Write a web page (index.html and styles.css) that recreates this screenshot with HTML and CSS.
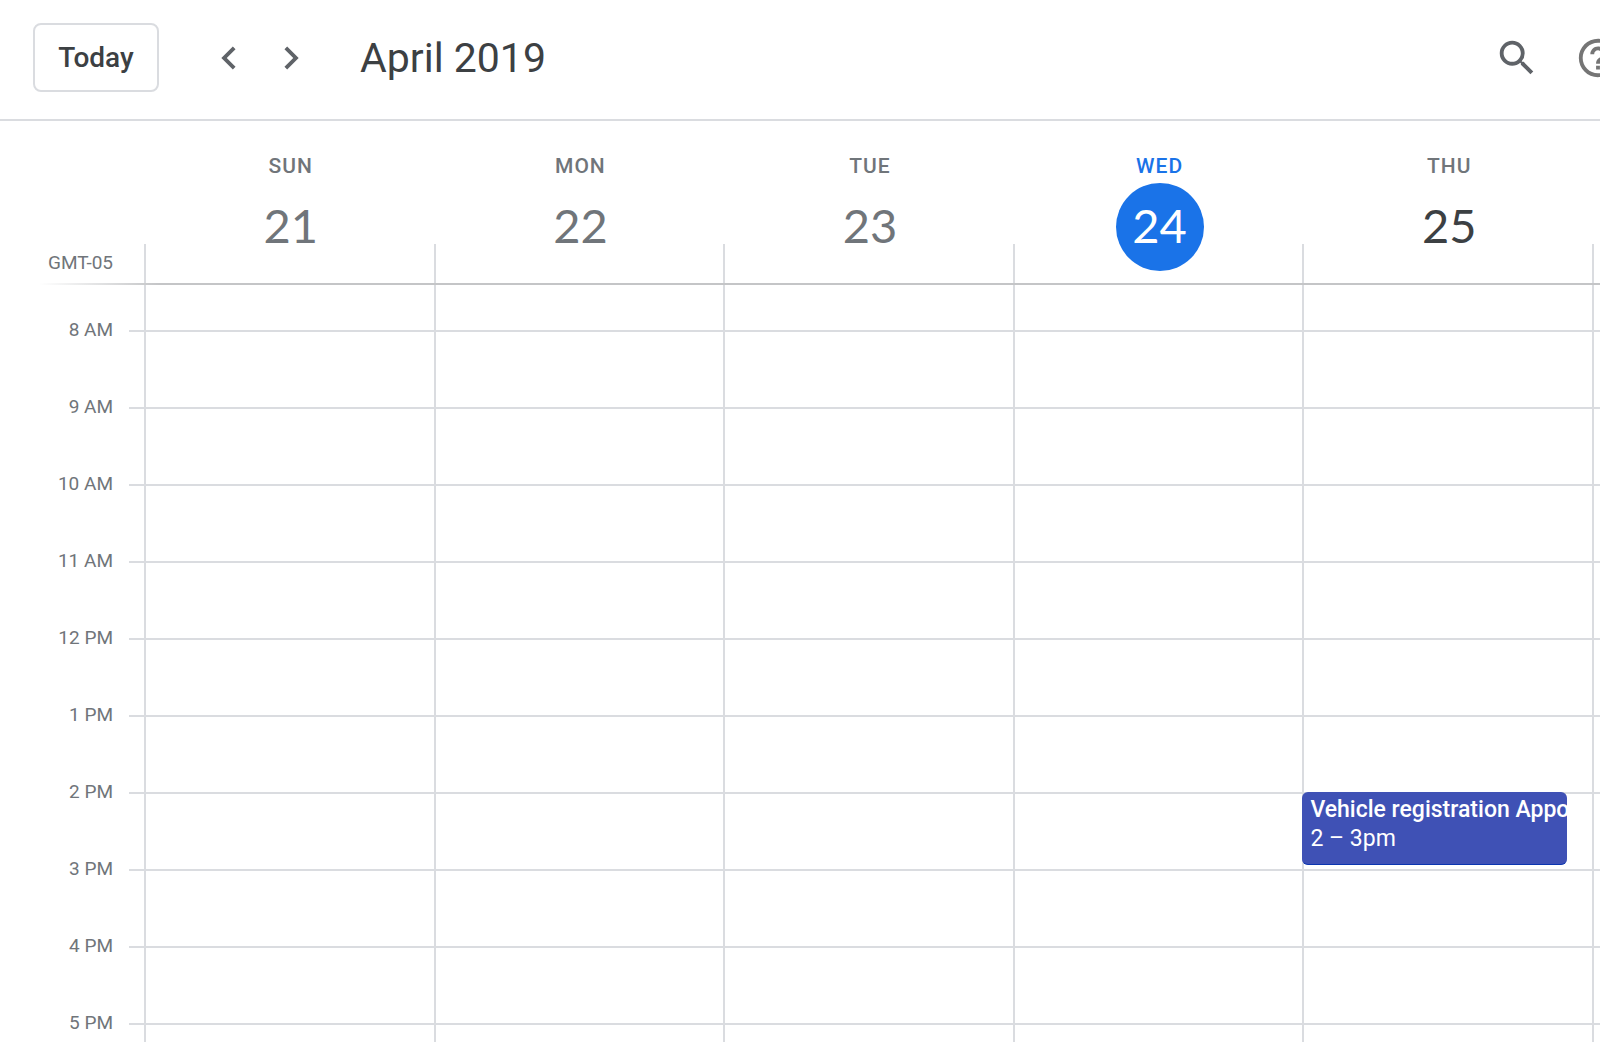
FILE: index.html
```html
<!DOCTYPE html>
<html lang="en">
<head>
    <meta charset="UTF-8">
    <meta name="viewport" content="width=device-width, initial-scale=1.0">
    <title>Calendar - April 2019</title>
    <link rel="stylesheet" href="styles.css">
</head>
<body>
    <header class="toolbar">
        <button class="today-button" type="button">Today</button>
        <nav class="pager">
            <button class="icon-button" type="button" aria-label="Previous week">
                <svg viewBox="0 0 24 24"><path d="M15.41 7.41L14 6l-6 6 6 6 1.41-1.41L10.83 12z"/></svg>
            </button>
            <button class="icon-button" type="button" aria-label="Next week">
                <svg viewBox="0 0 24 24"><path d="M10 6L8.59 7.41 13.17 12l-4.58 4.59L10 18l6-6z"/></svg>
            </button>
        </nav>
        <h1 class="title">April 2019</h1>
        <div class="actions">
            <button class="icon-button" type="button" aria-label="Search">
                <svg viewBox="0 0 24 24"><path d="M15.5 14h-.79l-.28-.27A6.471 6.471 0 0 0 16 9.5 6.5 6.5 0 1 0 9.5 16c1.61 0 3.09-.59 4.23-1.57l.27.28v.79l5 4.99L20.49 19l-4.99-5zm-6 0C7.01 14 5 11.99 5 9.5S7.01 5 9.5 5 14 7.01 14 9.5 11.99 14 9.5 14z"/></svg>
            </button>
            <button class="icon-button help" type="button" aria-label="Help">
                <svg viewBox="0 0 24 24"><path d="M11 18h2v-2h-2v2zm1-16C6.48 2 2 6.48 2 12s4.48 10 10 10 10-4.48 10-10S17.52 2 12 2zm0 18c-4.41 0-8-3.59-8-8s3.59-8 8-8 8 3.59 8 8-3.59 8-8 8zm0-14c-2.21 0-4 1.79-4 4h2c0-1.1.9-2 2-2s2 .9 2 2c0 2-3 1.75-3 5h2c0-2.25 3-2.5 3-5 0-2.21-1.79-4-4-4z"/></svg>
            </button>
        </div>
    </header>

    <main class="week">
        <div class="week-head">
            <div class="timezone">GMT-05</div>
            <div class="day past"><span class="day-name">Sun</span><span class="day-number">21</span></div>
            <div class="day past"><span class="day-name">Mon</span><span class="day-number">22</span></div>
            <div class="day past"><span class="day-name">Tue</span><span class="day-number">23</span></div>
            <div class="day today"><span class="day-name">Wed</span><span class="day-number">24</span></div>
            <div class="day"><span class="day-name">Thu</span><span class="day-number">25</span></div>
            <div class="day"></div>
        </div>

        <div class="week-body">
            <div class="hours">
                <div class="hour">8 AM</div>
                <div class="hour">9 AM</div>
                <div class="hour">10 AM</div>
                <div class="hour">11 AM</div>
                <div class="hour">12 PM</div>
                <div class="hour">1 PM</div>
                <div class="hour">2 PM</div>
                <div class="hour">3 PM</div>
                <div class="hour">4 PM</div>
                <div class="hour">5 PM</div>
            </div>
            <div class="column ticks"></div>
            <div class="column"></div>
            <div class="column"></div>
            <div class="column"></div>
            <div class="column"></div>
            <div class="column">
                <a class="event" href="#">
                    <span class="event-title">Vehicle registration Appointment</span>
                    <span class="event-time">2 – 3pm</span>
                </a>
            </div>
            <div class="column"></div>
        </div>
    </main>

    <script>
        // Fill every column with its hour slots
        document.querySelectorAll('.column').forEach(function (column) {
            for (var i = 0; i < 11; i++) {
                var slot = document.createElement('div');
                slot.className = 'slot';
                column.appendChild(slot);
            }
        });
    </script>
</body>
</html>
```

FILE: styles.css
```css
* {
    box-sizing: border-box;
}

body {
    margin: 0;
    height: 100vh;
    overflow: hidden;
    display: flex;
    flex-direction: column;
    background: #fff;
    color: #3c4043;
    font-family: Roboto, Arial, sans-serif;
}

button {
    font: inherit;
    color: inherit;
    background: none;
    border: none;
    padding: 0;
    cursor: pointer;
}

/* Toolbar */
.toolbar {
    flex: none;
    display: flex;
    align-items: center;
    height: 121px;
    padding: 0 0 4px 33px;
    border-bottom: 2px solid #dadce0;
}

.today-button {
    width: 126px;
    height: 69px;
    border: 2px solid #dadce0;
    border-radius: 8px;
    font-size: 28px;
    font-weight: 500;
}

.pager {
    display: flex;
    gap: 16px;
    margin: 0 46px 0 47px;
}

.icon-button {
    width: 46px;
    height: 46px;
}

.icon-button svg {
    display: block;
    fill: #5f6368;
}

.help svg {
    fill: #757575;
}

.title {
    margin: 0;
    font-size: 41px;
    font-weight: 400;
    line-height: 48px;
}

.actions {
    display: flex;
    gap: 35px;
    margin-left: auto;
    margin-right: -21px; /* help icon runs past the edge */
}

/* Week header */
.week {
    flex: 1;
    min-height: 0;
    overflow: hidden;
}

.week-head {
    position: relative;
    z-index: 1;
    display: grid;
    grid-template-columns: 144px repeat(5, 1fr) 8px;
    height: 164px;
    background: #fff;
    border-bottom: 2px solid;
    border-image: linear-gradient(to right, #fff 40px, #c4c5c7 160px) 1;
}

.timezone {
    align-self: end;
    padding: 0 31px 9px 0;
    text-align: right;
    font-size: 19px;
    line-height: 22px;
    color: #70757a;
}

.day {
    display: flex;
    flex-direction: column;
    align-items: center;
    padding: 33px 0 0 4px;
    background: linear-gradient(#dadce0, #dadce0) left bottom / 2px 39px no-repeat;
}

.day-name {
    font-size: 21px;
    font-weight: 500;
    line-height: 24px;
    letter-spacing: 1px;
    text-transform: uppercase;
    color: #70757a;
}

.day-number {
    width: 88px;
    height: 88px;
    margin-top: 5px;
    border-radius: 50%;
    font-family: Lato, sans-serif;
    font-size: 47px;
    line-height: 84px;
    text-align: center;
}

.past .day-number {
    color: #70757a;
}

.today .day-name {
    color: #1a73e8;
}

.today .day-number {
    background: #1a73e8;
    color: #fff;
}

/* Hour grid, scrolled so that the first slot is cut */
.week-body {
    display: grid;
    grid-template-columns: 129px 15px repeat(5, 1fr) 8px;
    margin-top: -30px;
}

.hours {
    padding: 36px 16px 0 0;
}

.hour {
    height: 77px;
    line-height: 77px;
    text-align: right;
    font-size: 19px;
    color: #70757a;
}

.column {
    position: relative;
    border-left: 2px solid #dadce0;
}

.ticks {
    border-left: none;
}

.slot {
    height: 77px;
    border-bottom: 2px solid #dadce0;
}

.event {
    position: absolute;
    top: 537px;
    left: -2px;
    right: 25px;
    height: 73px;
    padding: 3px 8px;
    overflow: hidden;
    border-radius: 6px;
    background: #3f51b5;
    border-bottom: 1px solid #0b35b0;
    color: #fff;
    font-size: 23px;
    line-height: 29px;
    white-space: nowrap;
    text-decoration: none;
}

.event-title,
.event-time {
    display: block;
}

.event-title {
    font-weight: 500;
}
```
